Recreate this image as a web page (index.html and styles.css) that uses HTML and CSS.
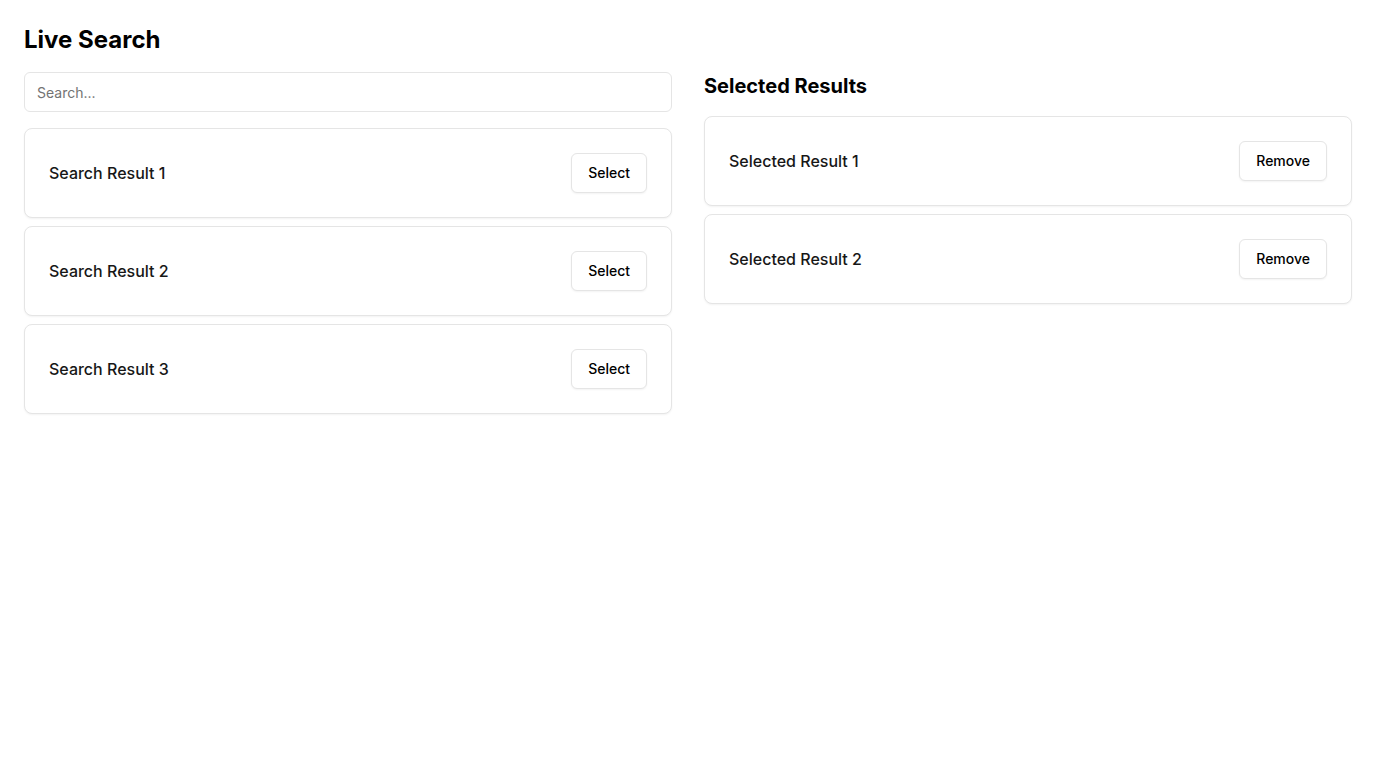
FILE: index.html
```html
<!DOCTYPE html>
<html lang="en">
<head>
<meta charset="utf-8">
<title>Live Search</title>
<link rel="stylesheet" href="styles.css">
</head>
<body>
<main class="page">
  <h1 class="title">Live Search</h1>
  <div class="columns">
    <section class="col">
      <input class="search" type="text" placeholder="Search...">
      <div class="list">
        <div class="card"><span class="label">Search Result 1</span><button class="btn">Select</button></div>
        <div class="card"><span class="label">Search Result 2</span><button class="btn">Select</button></div>
        <div class="card"><span class="label">Search Result 3</span><button class="btn">Select</button></div>
      </div>
    </section>
    <section class="col">
      <h2 class="subtitle">Selected Results</h2>
      <div class="list">
        <div class="card"><span class="label">Selected Result 1</span><button class="btn">Remove</button></div>
        <div class="card"><span class="label">Selected Result 2</span><button class="btn">Remove</button></div>
      </div>
    </section>
  </div>
</main>
</body>
</html>
```
FILE: styles.css
```css
* { box-sizing: border-box; }
html, body { margin: 0; background: #fff; }
body {
  font-family: Inter, "Noto Sans", sans-serif;
  color: #000;
}
.page { padding: 24px; }
.title {
  margin: 0 0 16px;
  font-size: 24px;
  line-height: 32px;
  font-weight: 700;
  color: #000;
}
.columns {
  display: grid;
  grid-template-columns: 1fr 1fr;
  gap: 32px;
  align-items: start;
}
.col { display: flex; flex-direction: column; }
.subtitle {
  margin: 0 0 16px;
  font-size: 20px;
  line-height: 28px;
  font-weight: 700;
  color: #000;
}
.search {
  height: 40px;
  width: 100%;
  border: 1px solid #e5e5e5;
  border-radius: 6px;
  padding: 0 12px;
  font-family: inherit;
  font-size: 14px;
  color: #0a0a0a;
  background: #fff;
  margin-bottom: 16px;
  outline: none;
}
.search::placeholder { color: #737373; }
.list { display: flex; flex-direction: column; gap: 8px; }
.card {
  display: flex;
  align-items: center;
  justify-content: space-between;
  padding: 24px;
  border: 1px solid #e5e5e5;
  border-radius: 8px;
  background: #fff;
  box-shadow: 0 1px 2px rgba(0,0,0,0.05);
}
.label { font-size: 16px; line-height: 24px; font-weight: 500; color: #171717; }
.btn {
  display: inline-flex;
  align-items: center;
  justify-content: center;
  height: 40px;
  padding: 0 16px 1px;
  border: 1px solid #e5e5e5;
  border-radius: 6px;
  background: #fff;
  font-family: inherit;
  font-size: 14px;
  line-height: 20px;
  font-weight: 500;
  color: #000;
  box-shadow: 0 1px 2px rgba(0,0,0,0.05);
  cursor: pointer;
}
```
